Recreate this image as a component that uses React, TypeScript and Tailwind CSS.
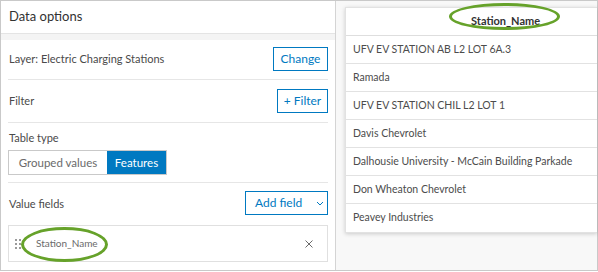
import React from "react";

const rows = [
  "UFV EV STATION AB L2 LOT 6A.3",
  "Ramada",
  "UFV EV STATION CHIL L2 LOT 1",
  "Davis Chevrolet",
  "Dalhousie University - McCain Building Parkade",
  "Don Wheaton Chevrolet",
  "Peavey Industries",
];

function OutlineButton({ children, className = "" }: { children: React.ReactNode; className?: string }) {
  return (
    <div
      className={
        "h-[24px] border border-[#0079c1] text-[#0079c1] text-[12px] flex items-center justify-center " + className
      }
    >
      {children}
    </div>
  );
}

export default function App() {
  return (
    <div
      className="w-[598px] h-[272px] bg-white overflow-hidden relative"
      style={{ fontFamily: "Lato, 'Noto Sans', sans-serif" }}
    >
      <div className="w-[598px] h-[271px] border border-[#c9c9c9] flex">
        {/* Left panel */}
        <div className="w-[335px] h-full border-r border-[#d4d4d4] bg-white flex flex-col">
          <div className="h-[33px] px-[8px] flex items-center text-[13px] text-[#323232] border-b border-[#e4e4e4]">
            Data options
          </div>
          <div className="h-[6px] bg-[#f4f4f4]" />
          <div className="px-[7px] flex flex-col">
            <div className="h-[40px] flex items-center justify-between border-b border-[#e6e6e6] text-[11px] text-[#4a4a4a]">
              <span className="pl-px">Layer: Electric Charging Stations</span>
              <OutlineButton className="w-[55px] mt-[-2px]">Change</OutlineButton>
            </div>
            <div className="h-[43px] flex items-center justify-between border-b border-[#e6e6e6] text-[11px] text-[#4a4a4a]">
              <span className="pl-px">Filter</span>
              <OutlineButton className="w-[51px]">+ Filter</OutlineButton>
            </div>
            <div className="h-[60px] flex flex-col border-b border-[#e6e6e6]">
              <span className="text-[11px] text-[#4a4a4a] pt-[8px] leading-[14px] pl-px">Table type</span>
              <div className="mt-[5px] w-[159px] h-[25px] border border-[#c9c9c9] flex text-[11.5px]">
                <div className="w-[98px] flex items-center justify-center text-[#6a6a6a]">Grouped values</div>
                <div className="flex-1 flex items-center justify-center bg-[#0079c1] text-white">Features</div>
              </div>
            </div>
            <div className="h-[42px] flex items-center justify-between text-[11px] text-[#4a4a4a]">
              <span className="pl-px">Value fields</span>
              <OutlineButton className="w-[83px] mt-[-2px] justify-start pl-[9px] gap-[14px]">
                <span>Add field</span>
                <svg width="8" height="5" viewBox="0 0 8 5" fill="none">
                  <path d="M1 1l3 3 3-3" stroke="#0079c1" strokeWidth="1" />
                </svg>
              </OutlineButton>
            </div>
            <div className="h-[37px] border border-[#e0e0e0] flex items-center pl-[6px] pr-[14px]">
              <div className="grid grid-cols-2 gap-x-[2px] gap-y-[2px] w-[6px]">
                {Array.from({ length: 6 }).map((_, i) => (
                  <span key={i} className="w-[2px] h-[2px] bg-[#9a9a9a]" />
                ))}
              </div>
              <span className="ml-[15px] text-[10px] text-[#6a6a6a]">Station_Name</span>
              <span className="ml-auto">
                <svg width="8" height="8" viewBox="0 0 8 8">
                  <path d="M0.5 0.5l7 7M7.5 0.5l-7 7" stroke="#6a6a6a" strokeWidth="1" />
                </svg>
              </span>
            </div>
          </div>
        </div>

        {/* Right area */}
        <div className="flex-1 bg-[#f8f8f8] pl-[9px] pt-[6px]">
          <div className="w-[252px] bg-white shadow-[0_1px_4px_rgba(0,0,0,0.18)] border border-[#e2e2e2] border-r-0">
            <div className="h-[28px] flex items-center pl-[125px] text-[11px] font-bold text-[#323232] border-b border-[#dedede]">
              Station_Name
            </div>
            {rows.map((r, i) => (
              <div
                key={r}
                className={
                  "h-[28px] flex items-center pl-[7px] text-[10.5px] text-[#4c4c4c] whitespace-nowrap " +
                  (i < rows.length - 1 ? "border-b border-[#e2e2e2]" : "")
                }
              >
                {r}
              </div>
            ))}
          </div>
        </div>
      </div>

      {/* Annotation ellipses */}
      <div className="absolute left-[21px] top-[227px] w-[87px] h-[35px] rounded-[50%] border-[3px] border-[#66a22a]" />
      <div className="absolute left-[449px] top-[3px] w-[111px] h-[27px] rounded-[50%] border-[3px] border-[#66a22a]" />
    </div>
  );
}
